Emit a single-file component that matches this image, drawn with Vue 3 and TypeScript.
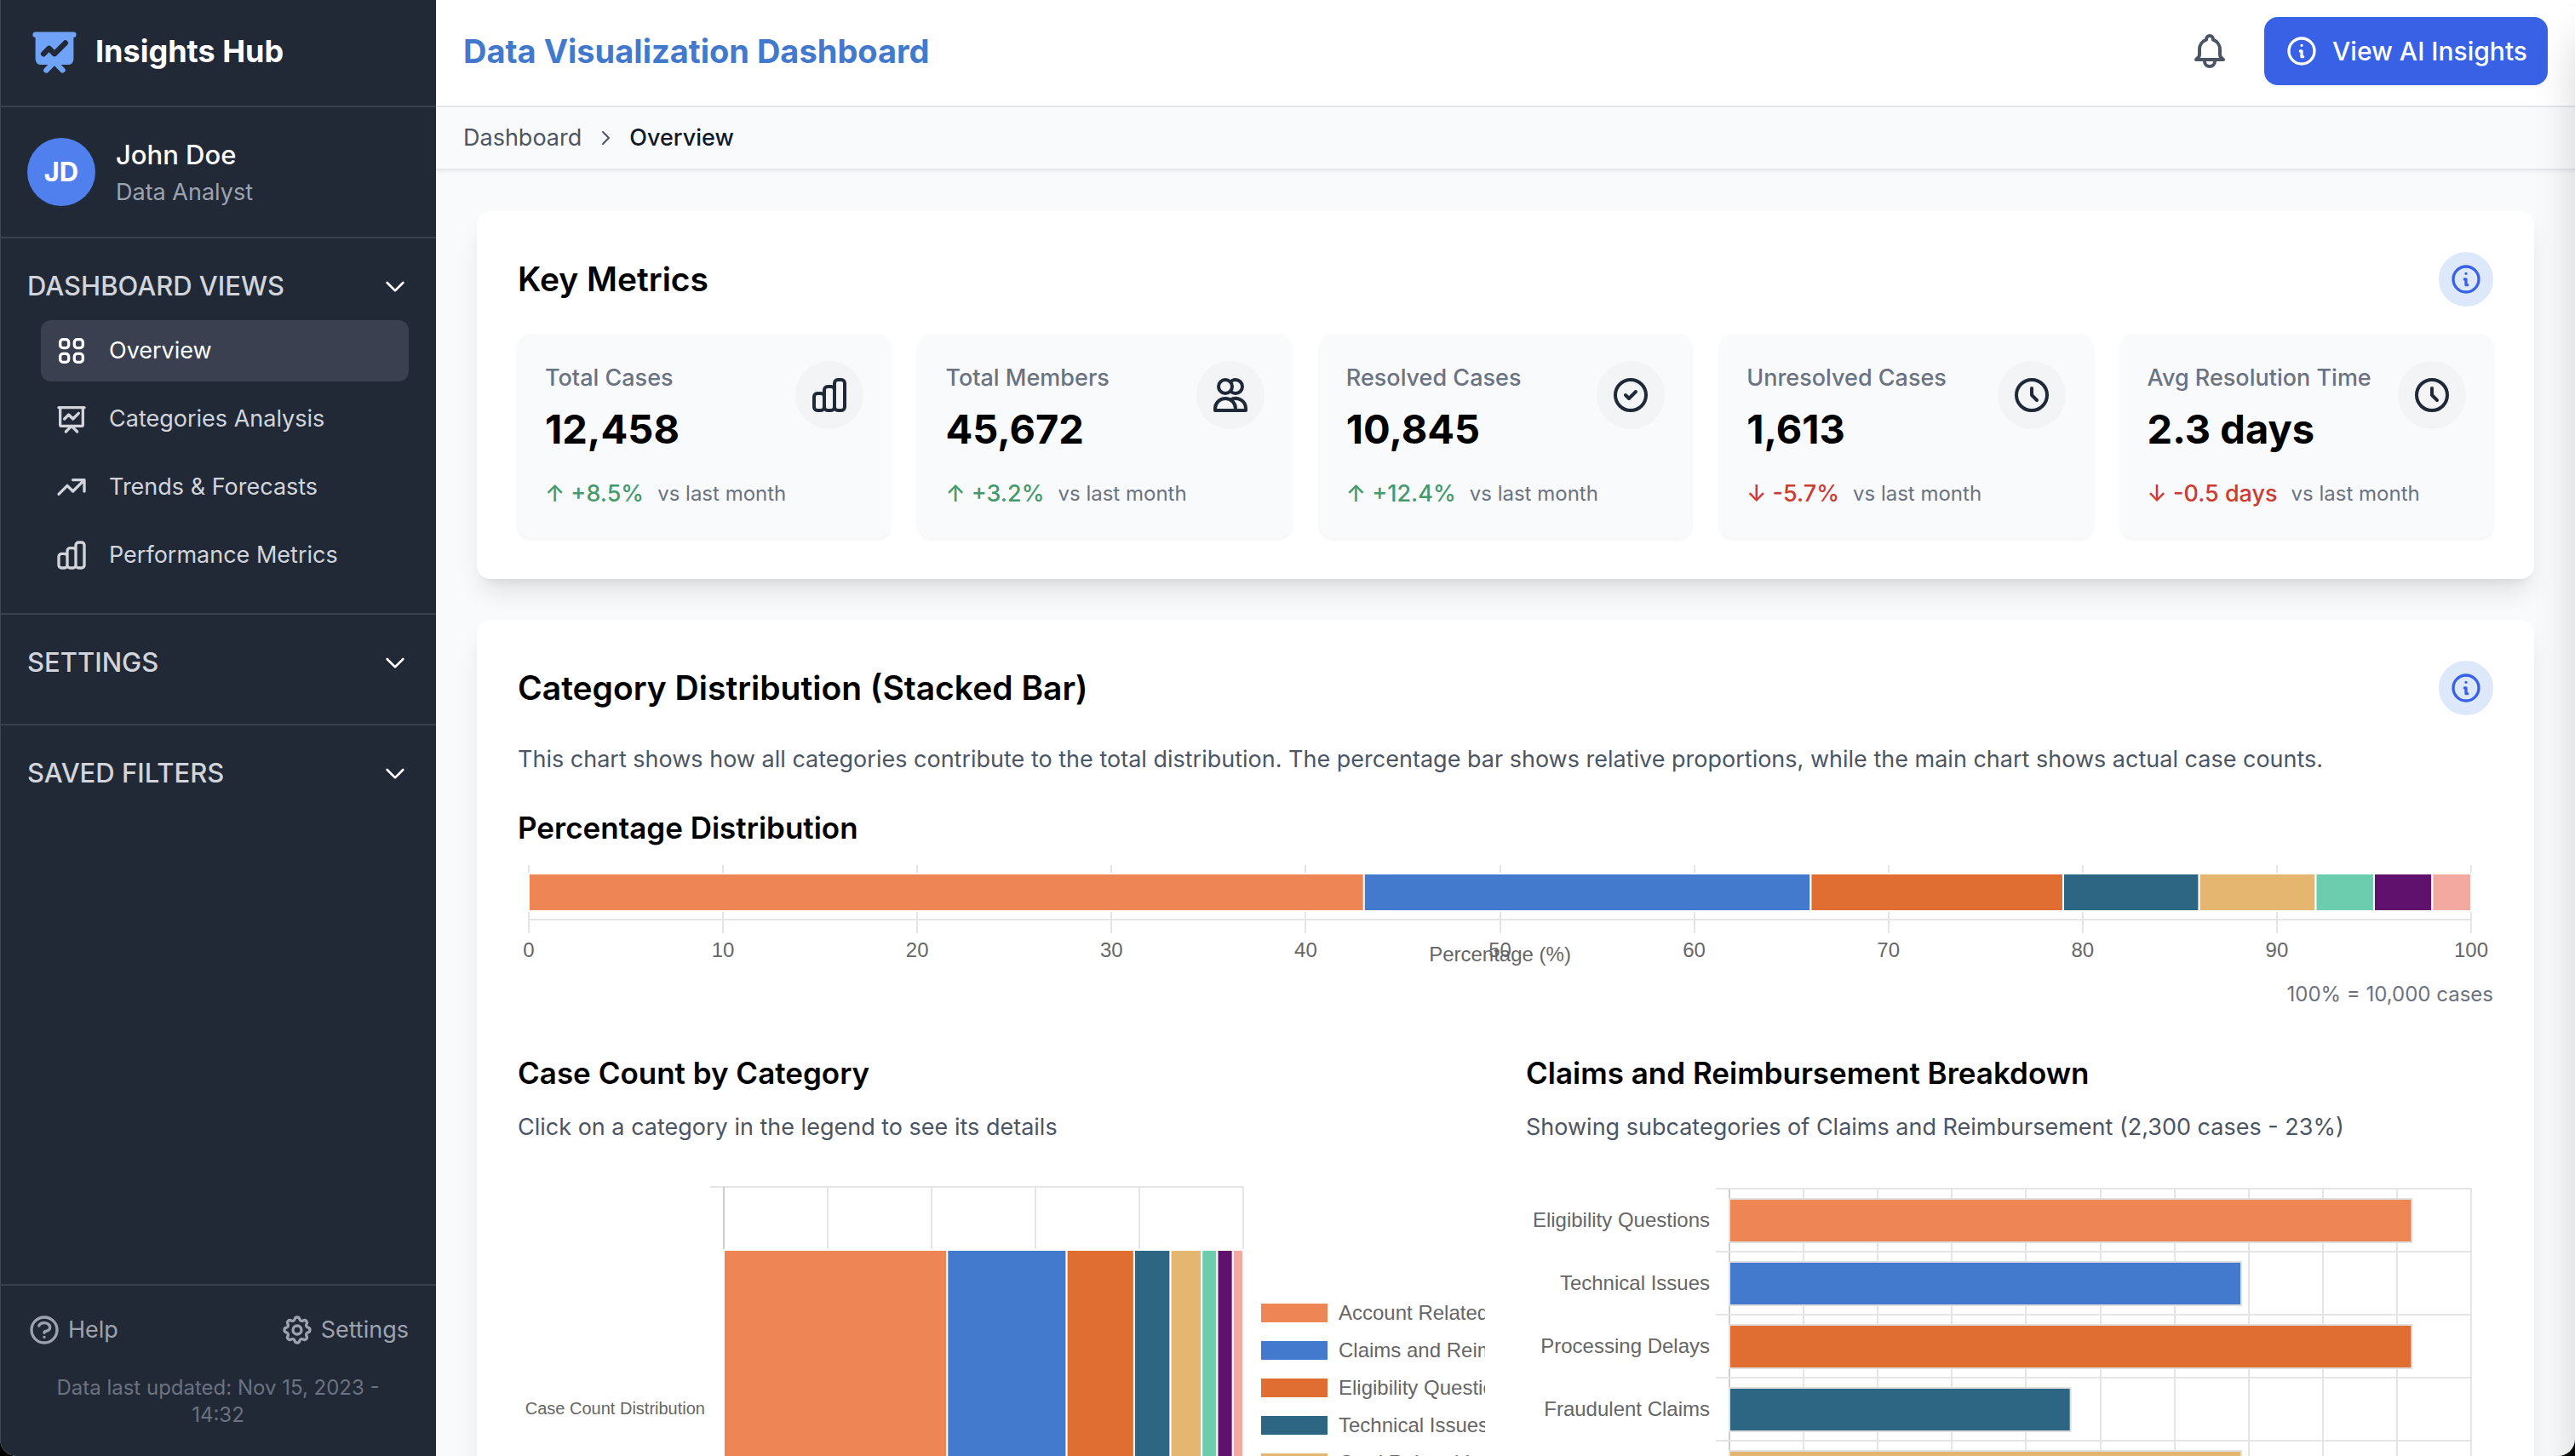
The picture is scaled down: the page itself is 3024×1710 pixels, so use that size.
<script setup lang="ts">
import { ref } from 'vue'

interface Series {
  label: string
  share: number
  color: string
}

interface Metric {
  label: string
  value: string
  change: string
  up: boolean
  icon: string
}

const icons: Record<string, string> = {
  grid: 'M4 6a2 2 0 012-2h2a2 2 0 012 2v2a2 2 0 01-2 2H6a2 2 0 01-2-2V6zM14 6a2 2 0 012-2h2a2 2 0 012 2v2a2 2 0 01-2 2h-2a2 2 0 01-2-2V6zM4 16a2 2 0 012-2h2a2 2 0 012 2v2a2 2 0 01-2 2H6a2 2 0 01-2-2v-2zM14 16a2 2 0 012-2h2a2 2 0 012 2v2a2 2 0 01-2 2h-2a2 2 0 01-2-2v-2z',
  board: 'M7 12l3-3 3 3 4-4M8 21l4-4 4 4M3 4h18M4 4h16v12a1 1 0 01-1 1H5a1 1 0 01-1-1V4z',
  trend: 'M13 7h8m0 0v8m0-8l-8 8-4-4-6 6',
  bars: 'M9 19v-6a2 2 0 00-2-2H5a2 2 0 00-2 2v6a2 2 0 002 2h2a2 2 0 002-2zm0 0V9a2 2 0 012-2h2a2 2 0 012 2v10m-6 0a2 2 0 002 2h2a2 2 0 002-2m0 0V5a2 2 0 012-2h2a2 2 0 012 2v14a2 2 0 01-2 2h-2a2 2 0 01-2-2z',
  down: 'M19 9l-7 7-7-7',
  right: 'M9 5l7 7-7 7',
  help: 'M8.228 9c.549-1.165 2.03-2 3.772-2 2.21 0 4 1.343 4 3 0 1.4-1.278 2.575-3.006 2.907-.542.104-.994.54-.994 1.093m0 3h.01M21 12a9 9 0 11-18 0 9 9 0 0118 0z',
  cog: 'M10.325 4.317c.426-1.756 2.924-1.756 3.35 0a1.724 1.724 0 002.573 1.066c1.543-.94 3.31.826 2.37 2.37a1.724 1.724 0 001.065 2.572c1.756.426 1.756 2.924 0 3.35a1.724 1.724 0 00-1.066 2.573c.94 1.543-.826 3.31-2.37 2.37a1.724 1.724 0 00-2.572 1.065c-.426 1.756-2.924 1.756-3.35 0a1.724 1.724 0 00-2.573-1.066c-1.543.94-3.31-.826-2.37-2.37a1.724 1.724 0 00-1.065-2.572c-1.756-.426-1.756-2.924 0-3.35a1.724 1.724 0 001.066-2.573c-.94-1.543.826-3.31 2.37-2.37.996.608 2.296.07 2.572-1.065zM15 12a3 3 0 11-6 0 3 3 0 016 0z',
  bell: 'M15 17h5l-1.405-1.405A2.032 2.032 0 0118 14.158V11a6.002 6.002 0 00-4-5.659V5a2 2 0 10-4 0v.341C7.67 6.165 6 8.388 6 11v3.159c0 .538-.214 1.055-.595 1.436L4 17h5m6 0v1a3 3 0 11-6 0v-1m6 0H9',
  info: 'M13 16h-1v-4h-1m1-4h.01M21 12a9 9 0 11-18 0 9 9 0 0118 0z',
  check: 'M9 12l2 2 4-4m6 2a9 9 0 11-18 0 9 9 0 0118 0z',
  clock: 'M12 8v4l3 3m6-3a9 9 0 11-18 0 9 9 0 0118 0z',
  users: 'M12 4.354a4 4 0 110 5.292M15 21H3v-1a6 6 0 0112 0v1zm0 0h6v-1a6 6 0 00-9-5.197M13 7a4 4 0 11-8 0 4 4 0 018 0z',
}

const views = [
  { label: 'Overview', icon: 'grid' },
  { label: 'Categories Analysis', icon: 'board' },
  { label: 'Trends & Forecasts', icon: 'trend' },
  { label: 'Performance Metrics', icon: 'bars' },
]
const activeView = ref('Overview')

const metrics: Metric[] = [
  { label: 'Total Cases', value: '12,458', change: '+8.5%', up: true, icon: 'bars' },
  { label: 'Total Members', value: '45,672', change: '+3.2%', up: true, icon: 'users' },
  { label: 'Resolved Cases', value: '10,845', change: '+12.4%', up: true, icon: 'check' },
  { label: 'Unresolved Cases', value: '1,613', change: '-5.7%', up: false, icon: 'clock' },
  { label: 'Avg Resolution Time', value: '2.3 days', change: '-0.5 days', up: false, icon: 'clock' },
]

const palette = ['#ee8555', '#437acd', '#e06d31', '#2d6683', '#e5b670', '#6ccdae', '#60116d', '#f3a9a0']
const shares = [43, 23, 13, 7, 6, 3, 3, 2]

// Each segment carries its left edge, in percent of the plot width.
const segments = shares.map((share, i) => ({
  share,
  start: shares.slice(0, i).reduce((sum, s) => sum + s, 0),
  color: palette[i],
}))

const legend = [
  'Account Related',
  'Claims and Reimbursement',
  'Eligibility Questions',
  'Technical Issues',
  'Card Related Issues',
].map((label, i) => ({ label, color: palette[i] }))

const breakdown: Series[] = [
  { label: 'Eligibility Questions', share: 92, color: palette[0] },
  { label: 'Technical Issues', share: 69, color: palette[1] },
  { label: 'Processing Delays', share: 92, color: palette[2] },
  { label: 'Fraudulent Claims', share: 46, color: palette[3] },
  { label: 'Other', share: 69, color: palette[4] },
]

const tenths = [0, 10, 20, 30, 40, 50, 60, 70, 80, 90, 100]
const fifths = [0, 20, 40, 60, 80, 100]
</script>

<template>
  <div class="app">
    <aside class="sidebar">
      <div class="brand">
        <svg class="brand-icon" viewBox="0 0 20 20" fill="currentColor" aria-hidden="true">
          <path fill-rule="evenodd" clip-rule="evenodd" d="M3 3a1 1 0 000 2v8a2 2 0 002 2h2.586l-1.293 1.293a1 1 0 101.414 1.414L10 15.414l2.293 2.293a1 1 0 001.414-1.414L12.414 15H15a2 2 0 002-2V5a1 1 0 100-2H3zm11.707 4.707a1 1 0 00-1.414-1.414L10 9.586 8.707 8.293a1 1 0 00-1.414 0l-2 2a1 1 0 101.414 1.414L8 10.414l1.293 1.293a1 1 0 001.414 0l4-4z" />
        </svg>
        <span class="brand-name">Insights Hub</span>
      </div>

      <div class="user">
        <div class="avatar">JD</div>
        <div>
          <div class="user-name">John Doe</div>
          <div class="user-role">Data Analyst</div>
        </div>
      </div>

      <nav class="nav">
        <section class="group">
          <button class="group-title" type="button">
            DASHBOARD VIEWS
            <svg class="icon i32" viewBox="0 0 24 24" aria-hidden="true"><path :d="icons.down" /></svg>
          </button>
          <div class="links">
            <a
              v-for="view in views"
              :key="view.label"
              href="#"
              class="link"
              :class="{ active: view.label === activeView }"
              @click.prevent="activeView = view.label"
            >
              <svg class="icon i40" viewBox="0 0 24 24" aria-hidden="true"><path :d="icons[view.icon]" /></svg>
              {{ view.label }}
            </a>
          </div>
        </section>
        <section class="group">
          <button class="group-title" type="button">
            SETTINGS
            <svg class="icon i32" viewBox="0 0 24 24" aria-hidden="true"><path :d="icons.down" /></svg>
          </button>
        </section>
        <section class="group">
          <button class="group-title" type="button">
            SAVED FILTERS
            <svg class="icon i32" viewBox="0 0 24 24" aria-hidden="true"><path :d="icons.down" /></svg>
          </button>
        </section>
      </nav>

      <div class="side-foot">
        <div class="foot-links">
          <button class="foot-link" type="button">
            <svg class="icon i40" viewBox="0 0 24 24" aria-hidden="true"><path :d="icons.help" /></svg>
            Help
          </button>
          <button class="foot-link" type="button">
            <svg class="icon i40" viewBox="0 0 24 24" aria-hidden="true"><path :d="icons.cog" /></svg>
            Settings
          </button>
        </div>
        <p class="updated">Data last updated: Nov 15, 2023 - 14:32</p>
      </div>
    </aside>

    <div class="content">
      <header class="topbar">
        <h1>Data Visualization Dashboard</h1>
        <div class="actions">
          <button class="bell" type="button" aria-label="Notifications">
            <svg class="icon i48" viewBox="0 0 24 24" aria-hidden="true"><path :d="icons.bell" /></svg>
          </button>
          <button class="ai" type="button">
            <svg class="icon i40" viewBox="0 0 24 24" aria-hidden="true"><path :d="icons.info" /></svg>
            View AI Insights
          </button>
        </div>
      </header>

      <nav class="crumbs" aria-label="Breadcrumb">
        <a href="#">Dashboard</a>
        <svg class="icon i24" viewBox="0 0 24 24" aria-hidden="true"><path :d="icons.right" /></svg>
        <span class="here">Overview</span>
      </nav>

      <main class="main">
        <section class="card">
          <div class="card-head">
            <h2>Key Metrics</h2>
            <button class="info" type="button" aria-label="About key metrics">
              <svg class="icon i40" viewBox="0 0 24 24" aria-hidden="true"><path :d="icons.info" /></svg>
            </button>
          </div>
          <div class="metrics">
            <article v-for="m in metrics" :key="m.label" class="metric">
              <div class="metric-top">
                <div>
                  <div class="metric-label">{{ m.label }}</div>
                  <div class="metric-value">{{ m.value }}</div>
                </div>
                <div class="metric-icon">
                  <svg class="icon i48" viewBox="0 0 24 24" aria-hidden="true"><path :d="icons[m.icon]" /></svg>
                </div>
              </div>
              <div class="metric-change">
                <span :class="m.up ? 'up' : 'down'">{{ m.up ? '↑' : '↓' }} {{ m.change }}</span>
                <span class="since">vs last month</span>
              </div>
            </article>
          </div>
        </section>

        <section class="card">
          <div class="card-head">
            <h2>Category Distribution (Stacked Bar)</h2>
            <button class="info" type="button" aria-label="About category distribution">
              <svg class="icon i40" viewBox="0 0 24 24" aria-hidden="true"><path :d="icons.info" /></svg>
            </button>
          </div>
          <p class="lead">This chart shows how all categories contribute to the total distribution. The percentage bar shows relative proportions, while the main chart shows actual case counts.</p>

          <h3>Percentage Distribution</h3>
          <div class="share-chart">
            <svg class="plot" height="120" role="img" aria-label="Percentage distribution">
              <line v-for="t in tenths" :key="t" :x1="t + '%'" :x2="t + '%'" y1="0" y2="80" class="rule" />
              <line x1="0" x2="100%" y1="64" y2="64" class="rule" />
              <rect
                v-for="s in segments"
                :key="s.start"
                :x="s.start + '%'"
                y="10"
                :width="s.share + '%'"
                height="44"
                :fill="s.color"
                class="segment"
              />
              <text v-for="t in tenths" :key="'l' + t" :x="t + '%'" y="108" text-anchor="middle">{{ t }}</text>
              <text x="50%" y="113" text-anchor="middle">Percentage (%)</text>
            </svg>
          </div>
          <p class="note">100% = 10,000 cases</p>

          <div class="columns">
            <div class="column">
              <h3>Case Count by Category</h3>
              <p class="hint">Click on a category in the legend to see its details</p>
              <div class="count-chart">
                <svg class="plot" height="560" role="img" aria-label="Case count by category">
                  <line v-for="t in fifths" :key="t" :x1="t + '%'" :x2="t + '%'" y1="34" y2="554" class="rule" />
                  <line x1="-16" x2="100%" y1="34" y2="34" class="rule" />
                  <line x1="0" x2="0" y1="34" y2="554" class="axis" />
                  <rect
                    v-for="s in segments"
                    :key="s.start"
                    :x="s.start + '%'"
                    y="108"
                    :width="s.share + '%'"
                    height="374"
                    :fill="s.color"
                    class="segment"
                  />
                  <text class="small" x="-22" y="301" text-anchor="end">Case Count Distribution</text>
                </svg>
                <div class="legend">
                  <button v-for="l in legend" :key="l.label" type="button" class="legend-item">
                    <span class="swatch" :style="{ background: l.color }"></span>
                    {{ l.label }}
                  </button>
                </div>
              </div>
            </div>

            <div class="column">
              <h3>Claims and Reimbursement Breakdown</h3>
              <p class="hint">Showing subcategories of Claims and Reimbursement (2,300 cases - 23%)</p>
              <div class="breakdown-chart">
                <svg class="plot" height="560" role="img" aria-label="Claims and reimbursement breakdown">
                  <line v-for="t in tenths" :key="t" :x1="t + '%'" :x2="t + '%'" y1="36" y2="406" class="rule" />
                  <line x1="0" x2="0" y1="36" y2="406" class="axis" />
                  <g v-for="(b, i) in breakdown" :key="b.label">
                    <line x1="-16" x2="100%" :y1="36 + i * 74" :y2="36 + i * 74" class="rule" />
                    <rect x="0" :y="48 + i * 74" :width="b.share + '%'" height="51" :fill="b.color" class="bar" />
                    <text x="-23" :y="81 + i * 74" text-anchor="end">{{ b.label }}</text>
                  </g>
                </svg>
              </div>
            </div>
          </div>
        </section>
      </main>
    </div>

    <aside class="drawer" aria-hidden="true"></aside>
  </div>
</template>

<style>
html {
  background: #000;
}
</style>

<style scoped>
.app {
  position: relative;
  display: flex;
  height: 100vh;
  overflow: hidden;
  border-radius: 0 0 20px 20px;
  background: #f9fafb;
  color: #000;
  font-family: Inter, 'Liberation Sans', sans-serif;
  font-size: 27px;
  line-height: 40px;
}
h1, h2, h3, p {
  margin: 0;
}
button {
  margin: 0;
  padding: 0;
  border: 0;
  background: none;
  color: inherit;
  font: inherit;
  cursor: pointer;
}
a {
  color: inherit;
  text-decoration: none;
}
.icon {
  flex: none;
  display: block;
  fill: none;
  stroke: currentColor;
  stroke-width: 2;
  stroke-linecap: round;
  stroke-linejoin: round;
}
.i24 { width: 24px; height: 24px; }
.i32 { width: 32px; height: 32px; }
.i40 { width: 40px; height: 40px; }
.i48 { width: 48px; height: 48px; }

/* Sidebar */
.sidebar {
  flex: none;
  box-sizing: border-box;
  width: 512px;
  display: flex;
  flex-direction: column;
  background: #222936;
  box-shadow: inset 1px 0 #3f4552;
  color: #fff;
}
.brand {
  display: flex;
  align-items: center;
  gap: 16px;
  padding: 28px 32px 32px;
  border-bottom: 2px solid #3a414e;
}
.brand-icon {
  width: 64px;
  height: 64px;
  color: #6ea3f7;
}
.brand-name {
  font-size: 36px;
  font-weight: 700;
}
.user {
  display: flex;
  align-items: center;
  gap: 24px;
  padding: 32px;
  border-bottom: 2px solid #3a414e;
}
.avatar {
  display: flex;
  align-items: center;
  justify-content: center;
  width: 80px;
  height: 80px;
  border-radius: 50%;
  background: #4f80ee;
  font-size: 31px;
  font-weight: 700;
}
.user-name {
  font-size: 31px;
  line-height: 48px;
  font-weight: 500;
}
.user-role {
  color: #9ca3af;
}
.nav {
  flex: 1;
}
.group {
  padding: 32px;
}
.group + .group {
  padding-bottom: 48px;
  border-top: 2px solid #3a414e;
}
.group-title {
  display: flex;
  align-items: center;
  justify-content: space-between;
  width: 100%;
  color: #d1d5db;
  font-size: 31px;
  line-height: 48px;
  font-weight: 500;
}
.group-title .icon {
  color: #fff;
}
.links {
  display: flex;
  flex-direction: column;
  gap: 8px;
  margin: 16px 0 0 16px;
}
.link {
  display: flex;
  align-items: center;
  gap: 24px;
  padding: 16px;
  border-radius: 12px;
  color: #d1d5db;
}
.link.active {
  background: #3a404f;
  color: #fff;
}
.side-foot {
  padding: 32px;
  border-top: 2px solid #3a414e;
}
.foot-links {
  display: flex;
  justify-content: space-between;
}
.foot-link {
  display: flex;
  align-items: center;
  gap: 8px;
  color: #9ca3af;
}
.updated {
  margin-top: 32px;
  padding: 0 16px;
  color: #6b7280;
  font-size: 24px;
  line-height: 32px;
  text-align: center;
}

/* Top bars */
.content {
  flex: 1;
  min-width: 0;
  display: flex;
  flex-direction: column;
}
.topbar {
  display: flex;
  align-items: center;
  justify-content: space-between;
  padding: 20px 32px 24px;
  border-bottom: 2px solid #e5e7eb;
  background: #fff;
}
h1 {
  color: #4379cc;
  font-size: 38px;
  line-height: 56px;
  font-weight: 700;
}
.actions {
  display: flex;
  align-items: center;
  gap: 40px;
}
.bell {
  color: #4b5563;
}
.ai {
  display: flex;
  align-items: center;
  gap: 16px;
  padding: 20px 24px;
  border-radius: 16px;
  background: #3861e5;
  box-shadow: 0 2px 4px rgba(0, 0, 0, 0.05);
  color: #fff;
  font-size: 30px;
  font-weight: 500;
}
.crumbs {
  position: relative;
  display: flex;
  align-items: center;
  gap: 16px;
  padding: 16px 32px;
  border-bottom: 2px solid #e5e7eb;
  background: #f9fafc;
  box-shadow: 0 2px 4px rgba(0, 0, 0, 0.05);
  color: #4b5563;
}
.here {
  color: #111827;
  font-weight: 500;
}

/* Cards */
.main {
  flex: 1;
  min-height: 0;
  overflow: hidden;
  display: flex;
  flex-direction: column;
  gap: 48px;
  padding: 48px;
}
.card {
  flex: none;
  padding: 48px;
  border-radius: 16px;
  background: #fff;
  box-shadow: 0 20px 30px -6px rgba(0, 0, 0, 0.1), 0 8px 12px -8px rgba(0, 0, 0, 0.1);
}
.card-head {
  display: flex;
  align-items: center;
  justify-content: space-between;
}
h2 {
  font-size: 39px;
  line-height: 56px;
  font-weight: 600;
}
h3 {
  font-size: 35px;
  line-height: 56px;
  font-weight: 600;
}
.info {
  padding: 12px;
  border-radius: 50%;
  background: #dee8fb;
  color: #3861e5;
}
.metrics {
  display: grid;
  grid-template-columns: repeat(5, 1fr);
  gap: 32px;
  margin-top: 32px;
}
.metric {
  padding: 32px;
  border-radius: 16px;
  background: #f9fafc;
  box-shadow: 0 2px 4px rgba(0, 0, 0, 0.05);
  white-space: nowrap;
}
.metric-top {
  display: flex;
  align-items: flex-start;
  justify-content: space-between;
}
.metric-label {
  color: #6b7280;
  font-weight: 500;
}
.metric-value {
  margin-top: 8px;
  font-size: 47px;
  line-height: 64px;
  font-weight: 700;
}
.metric-icon {
  padding: 16px;
  border-radius: 50%;
  background: #f3f4f6;
  color: #1f2937;
}
.metric-change {
  display: flex;
  align-items: center;
  gap: 16px;
  margin-top: 24px;
}
.up {
  color: #449a6c;
  font-weight: 500;
}
.down {
  color: #cd3b31;
  font-weight: 500;
}
.since {
  color: #6b7280;
  font-size: 24px;
}
.lead {
  margin: 32px 0;
  color: #4b5563;
}
.note {
  margin-top: 16px;
  color: #6b7280;
  font-size: 24px;
  line-height: 32px;
  text-align: right;
}
.hint {
  margin: 16px 0;
  color: #4b5563;
}
.columns {
  display: grid;
  grid-template-columns: 1fr 1fr;
  gap: 48px;
  margin-top: 48px;
}
.column {
  min-width: 0;
}

/* Charts */
.plot {
  display: block;
  width: 100%;
  overflow: visible;
  font-family: 'Liberation Sans', sans-serif;
  font-size: 24px;
  fill: #666;
}
.small {
  font-size: 20px;
}
.rule {
  stroke: #e5e5e5;
  stroke-width: 2;
  shape-rendering: crispEdges;
}
.axis {
  stroke: #cdcdcd;
  stroke-width: 2;
  shape-rendering: crispEdges;
}
.segment {
  stroke: #fff;
  stroke-width: 2;
}
.bar {
  stroke: #e0e0e0;
  stroke-width: 2;
}
.share-chart {
  margin-top: 16px;
  padding: 0 26px 0 13px;
}
.count-chart {
  display: flex;
  gap: 20px;
  padding-left: 242px;
}
.count-chart .plot {
  flex: 1;
  min-width: 0;
}
.legend {
  flex: none;
  width: 264px;
  padding-top: 160px;
  overflow: hidden;
  font-family: 'Liberation Sans', sans-serif;
  font-size: 24px;
  line-height: 44px;
  color: #666;
}
.legend-item {
  display: flex;
  align-items: center;
  gap: 12px;
  white-space: nowrap;
}
.swatch {
  flex: none;
  box-sizing: border-box;
  width: 80px;
  height: 24px;
  border: 1px solid #fff;
}
.breakdown-chart {
  padding: 0 26px 0 239px;
}

/* Insights drawer, closed: it waits past the right edge and only its shadow shows */
.drawer {
  position: absolute;
  top: 0;
  left: 100%;
  width: 768px;
  height: 100%;
  box-shadow: 0 40px 50px -6px rgba(0, 0, 0, 0.2);
}
</style>
